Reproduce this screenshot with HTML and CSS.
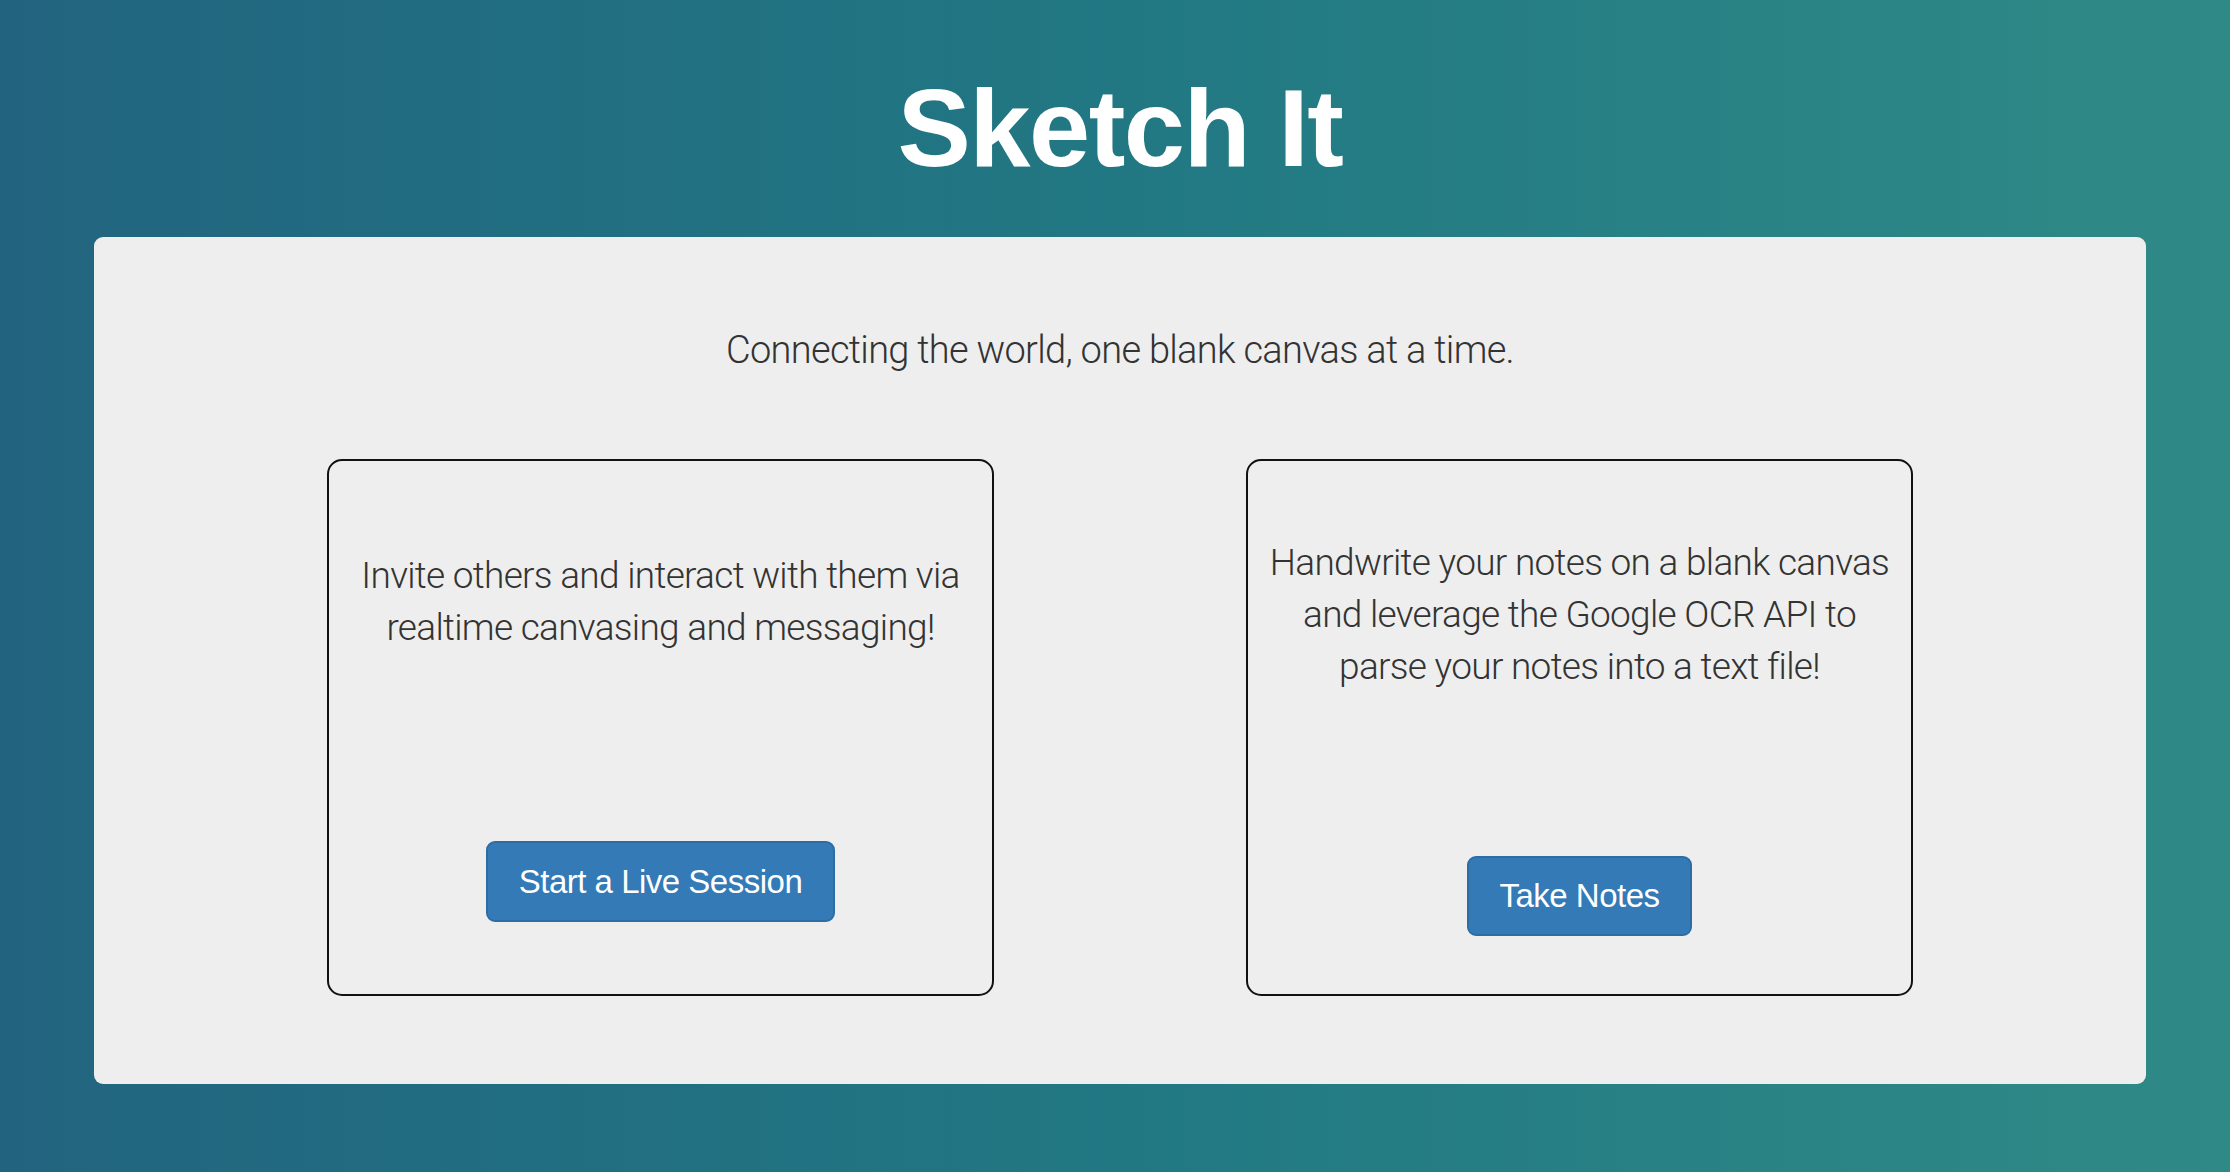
FILE: index.html
```html
<!DOCTYPE html>
<html lang="en">
<head>
<meta charset="utf-8">
<title>Sketch It</title>
<link rel="stylesheet" href="styles.css">
</head>
<body>
<div class="page">
  <header class="header">
    <h1 class="title">Sketch It</h1>
  </header>
  <main class="panel">
    <p class="tagline">Connecting the world, one blank canvas at a time.</p>
    <div class="cards">
      <section class="card card-live">
        <p class="card-text">Invite others and interact with them via realtime canvasing and messaging!</p>
        <button class="btn">Start a Live Session</button>
      </section>
      <section class="card card-notes">
        <p class="card-text">Handwrite your notes on a blank canvas and leverage the Google OCR API to parse your notes into a text file!</p>
        <button class="btn">Take Notes</button>
      </section>
    </div>
  </main>
</div>
</body>
</html>
```

FILE: styles.css
```css
* { box-sizing: border-box; }
html, body {
  margin: 0;
  padding: 0;
  height: 100%;
}
body {
  background: linear-gradient(to right, #22647f 0%, #217883 50%, #2f8a86 100%);
  font-family: Roboto, "Liberation Sans", Arial, sans-serif;
  color: #333333;
}
.page {
  padding: 0 84px 0 94px;
  min-height: 1172px;
}
.header {
  padding-top: 67px;
  height: 237px;
}
.title {
  margin: 0;
  text-align: center;
  font-family: "Liberation Sans", Arial, sans-serif;
  font-weight: 700;
  font-size: 110px;
  line-height: 121px;
  letter-spacing: -1.5px;
  color: #ffffff;
}
.panel {
  background: #eeeeee;
  border-radius: 9px;
  height: 847px;
  padding-top: 87px;
}
.tagline {
  margin: 0;
  text-align: center;
  font-weight: 300;
  font-size: 38px;
  line-height: 53px;
  letter-spacing: -0.7px;
  color: #333333;
}
.cards {
  display: flex;
  justify-content: center;
  gap: 252px;
  margin-top: 82px;
}
.card {
  width: 667px;
  height: 537px;
  border: 2px solid #111111;
  border-radius: 15px;
  display: flex;
  flex-direction: column;
  align-items: center;
  padding: 0 10px;
}
.card-text {
  margin: 0;
  text-align: center;
  font-weight: 300;
  font-size: 37px;
  line-height: 52px;
  letter-spacing: -0.7px;
  color: #333333;
}
.card-live .card-text { margin-top: 89px; padding: 0 16px; }
.card-live .btn { margin-top: 187px; padding-top: 17px; }
.card-notes .card-text { margin-top: 76px; padding: 0 8px; }
.card-notes .btn { margin-top: 163px; padding-left: 30px; padding-right: 30px; }
.btn {
  font-family: "Liberation Sans", Arial, sans-serif;
  font-size: 33px;
  line-height: 44px;
  letter-spacing: -0.5px;
  color: #ffffff;
  background: #337ab7;
  border: 2px solid #2e6da4;
  border-radius: 9px;
  padding: 16px 31px;
  cursor: pointer;
}
```
